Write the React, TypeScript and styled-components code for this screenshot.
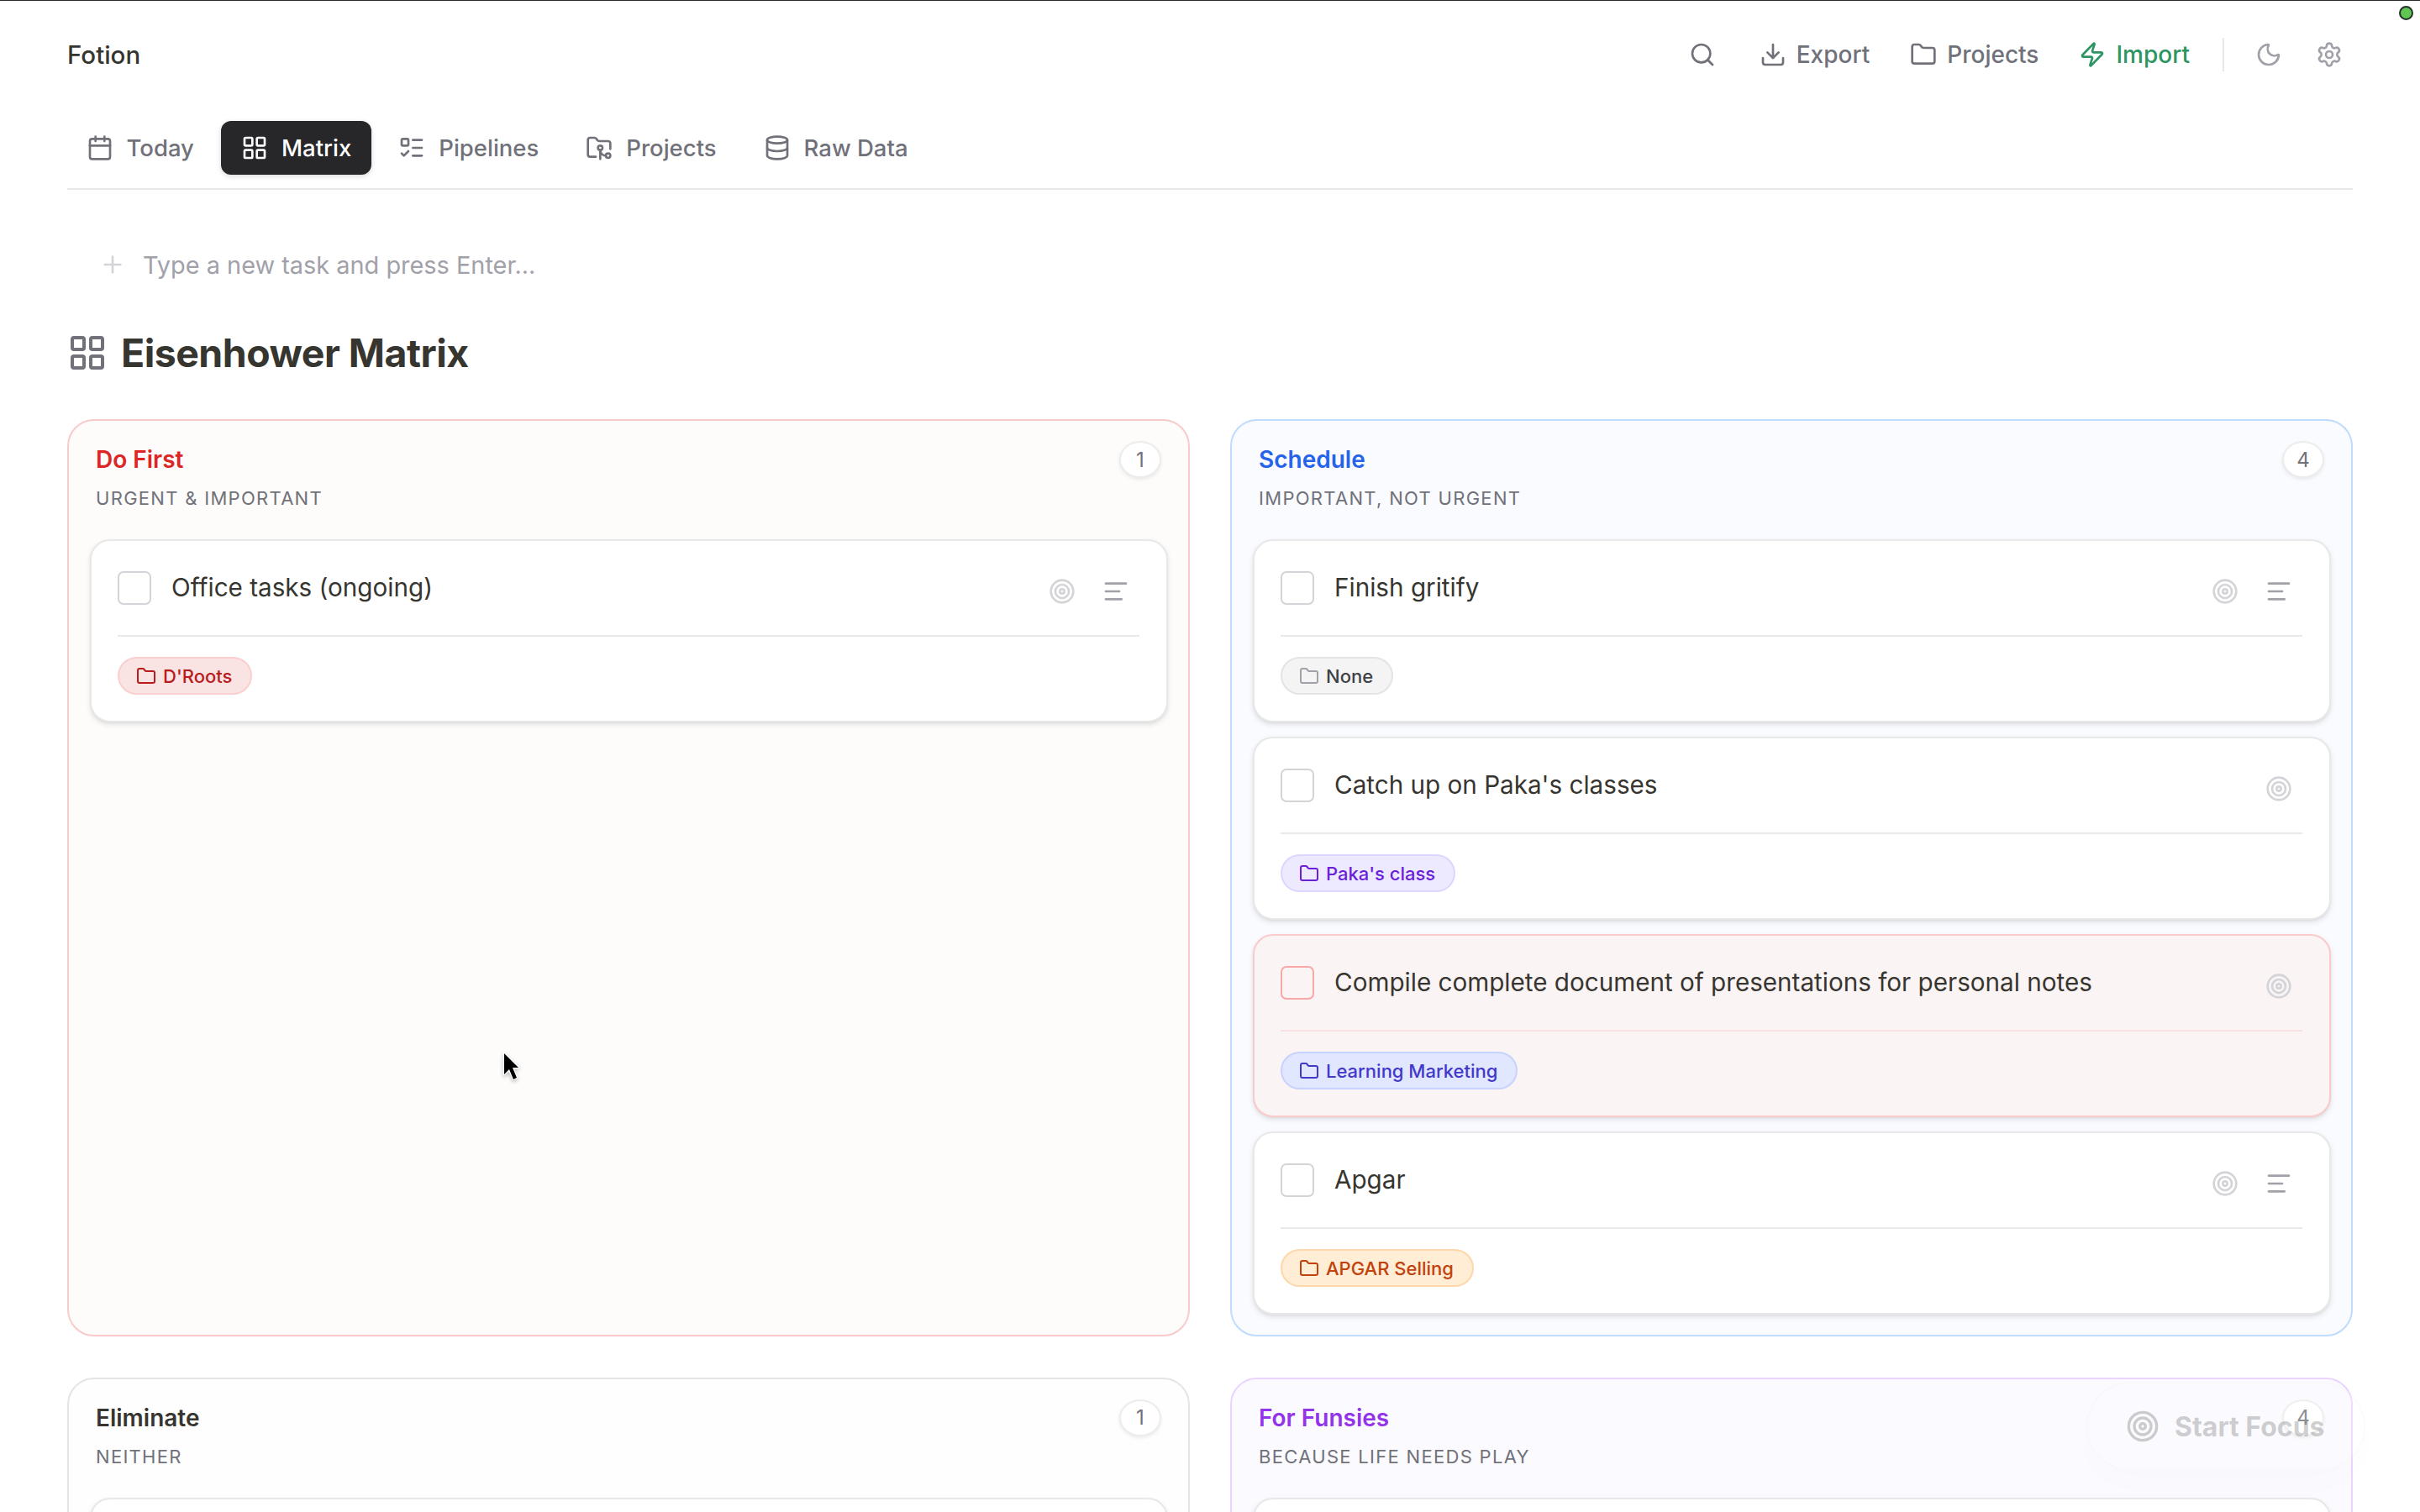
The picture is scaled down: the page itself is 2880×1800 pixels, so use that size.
import React from 'react';
import styled, { createGlobalStyle } from 'styled-components';
import {
  Calendar, LayoutGrid, ListTodo, FolderGit2, Database, Search, Download, Folder, Zap, Moon, Settings, Plus, Target,
} from 'lucide-react';

const Global = createGlobalStyle`
  html, body { margin: 0; padding: 0; background: #fff; }
  body { width: 2880px; height: 1800px; overflow: hidden; font-family: Inter, "Noto Sans", sans-serif; color: #37352f; }
  * { box-sizing: border-box; }
`;

const Page = styled.div`
  position: relative;
  width: 2880px;
  height: 1800px;
  overflow: hidden;
  border-top: 1px solid #2a2a2a;
  padding: 0 80px;
`;

const StatusDot = styled.span`
  position: absolute;
  top: 6px;
  right: 8px;
  width: 17px;
  height: 17px;
  border-radius: 50%;
  background: #5fc653;
  border: 2px solid #26332a;
`;

const TopBar = styled.header`
  display: flex;
  align-items: center;
  justify-content: space-between;
  height: 128px;
`;

const Brand = styled.div`
  font-size: 29.5px;
  font-weight: 500;
  color: #37352f;
`;

const Actions = styled.div`
  display: flex;
  align-items: center;
  margin-right: 12px;
`;

const ActionButton = styled.button<{ $tone?: string; $gap?: number }>`
  display: flex;
  align-items: center;
  gap: 12px;
  height: 56px;
  padding: 0;
  margin-left: ${(p) => p.$gap ?? 0}px;
  border: none;
  background: none;
  font: 500 28px Inter, sans-serif;
  color: ${(p) => p.$tone ?? '#71717a'};
`;

const VRule = styled.span`
  width: 2px;
  height: 40px;
  background: #e8e8e8;
  margin-left: 39px;
`;

const Tabs = styled.nav`
  display: flex;
  gap: 8px;
  height: 97px;
  padding-top: 15px;
  border-bottom: 2px solid #e8e8e8;
`;

const TabList = styled.div`
  display: flex;
  gap: 8px;
  margin-left: -1.5px;
`;

const Tab = styled.button<{ $active?: boolean }>`
  display: flex;
  align-items: center;
  gap: 16px;
  height: 64px;
  padding: 0 24px;
  border: none;
  border-radius: 12px;
  font: 500 27.5px Inter, sans-serif;
  color: ${(p) => (p.$active ? '#fff' : '#71717a')};
  background: ${(p) => (p.$active ? '#27272a' : 'transparent')};
  box-shadow: ${(p) => (p.$active ? '0 2px 6px rgba(0,0,0,.15)' : 'none')};
`;

const Composer = styled.div`
  display: flex;
  align-items: center;
  gap: 20px;
  height: 60px;
  margin-top: 59px;
  padding-left: 38px;
  font-size: 28.9px;
  color: #a1a1aa;
`;

const Heading = styled.h1`
  display: flex;
  align-items: center;
  gap: 16px;
  height: 60px;
  margin: 45px 0 49px;
  font-size: 46.4px;
  font-weight: 700;
  letter-spacing: -0.5px;
  color: #37352f;
  svg { color: #71717a; }
`;

const Matrix = styled.div`
  display: grid;
  grid-template-columns: 1fr 1fr;
  column-gap: 48px;
  row-gap: 49px;
`;

const Panel = styled.section<{ $border: string; $bg: string }>`
  border: 2px solid ${(p) => p.$border};
  background: ${(p) => p.$bg};
  border-radius: 32px;
  padding: 24px 24.5px 24px;
`;

const PanelHead = styled.div`
  display: flex;
  justify-content: space-between;
  align-items: flex-start;
  padding: 0 7.5px;
  height: 117px;
`;

const PanelTitle = styled.h2<{ $color: string }>`
  margin: 0;
  font-size: 28px;
  line-height: 44px;
  font-weight: 600;
  color: ${(p) => p.$color};
`;

const PanelSub = styled.p`
  margin: 2px 0 0;
  font-size: 22px;
  line-height: 44px;
  letter-spacing: 1.3px;
  font-weight: 400;
  color: #71717a;
  text-transform: uppercase;
`;

const Count = styled.span`
  display: flex;
  align-items: center;
  justify-content: center;
  width: 50px;
  height: 44px;
  background: #fff;
  border: 2px solid #ececec;
  border-radius: 50%;
  box-shadow: 0 2px 4px rgba(0,0,0,.08);
  font-size: 24px;
  color: #71717a;
`;

const Cards = styled.div`
  display: flex;
  flex-direction: column;
  gap: 17.5px;
`;

const Card = styled.article<{ $alert?: boolean }>`
  height: 217.5px;
  padding: 32px 31.5px 0;
  background: ${(p) => (p.$alert ? '#fbf4f4' : '#fff')};
  border: 2px solid ${(p) => (p.$alert ? '#fbcaca' : '#e8e8e8')};
  border-radius: 24px;
  box-shadow: 0 3px 6px rgba(0,0,0,.1), 0 1px 2px rgba(0,0,0,.05);
`;

const CardTop = styled.div<{ $alert?: boolean }>`
  display: flex;
  align-items: flex-start;
  height: 82px;
  border-bottom: 2px solid ${(p) => (p.$alert ? '#f9e1e1' : '#e9e9ea')};
`;

const Check = styled.span<{ $alert?: boolean }>`
  flex: none;
  width: 40px;
  height: 40px;
  margin-top: 4px;
  border: 2px solid ${(p) => (p.$alert ? '#f9a8a8' : '#d4d4d8')};
  border-radius: 7px;
`;

const TaskName = styled.div`
  flex: 1;
  margin-left: 24px;
  font-size: 29.65px;
  line-height: 47px;
  color: #37352f;
`;

const IconGroup = styled.div`
  display: flex;
  gap: 8px;
`;

const IconSlot = styled.span<{ $color: string }>`
  display: flex;
  align-items: center;
  justify-content: center;
  width: 56px;
  height: 56px;
  color: ${(p) => p.$color};
`;

const Chip = styled.span<{ $bg: string; $border: string; $fg: string; $icon: string }>`
  display: inline-flex;
  align-items: center;
  gap: 8px;
  height: 45px;
  margin-top: 24px;
  padding: 0 22px 0 20px;
  border-radius: 23px;
  border: 2px solid ${(p) => p.$border};
  background: ${(p) => p.$bg};
  color: ${(p) => p.$fg};
  font-size: 22px;
  font-weight: 500;
  svg { color: ${(p) => p.$icon}; }
`;

const FocusButton = styled.button`
  position: absolute;
  left: 2483px;
  top: 1644px;
  width: 332px;
  height: 106px;
  display: flex;
  align-items: center;
  gap: 18px;
  padding: 0 0 0 45px;
  border: 2px solid rgba(0,0,0,.015);
  border-radius: 53px;
  background: rgba(255,255,255,.2);
  box-shadow: 0 16px 40px rgba(0,0,0,.012);
  font: 700 32px Inter, sans-serif;
  color: rgba(120,120,120,.36);
`;

const Cursor = styled.svg`
  position: absolute;
  left: 595px;
  top: 1248px;
  filter: drop-shadow(0 2px 2px rgba(0,0,0,.25));
`;

function AlignLines() {
  return (
    <svg width="32" height="32" viewBox="0 0 24 24" fill="none" stroke="currentColor" strokeWidth="2" strokeLinecap="round">
      <path d="M21 5H3" />
      <path d="M15 12H3" />
      <path d="M17 19H3" />
    </svg>
  );
}

const chipTones = {
  red: { bg: '#fae3e3', border: '#fbcfcf', fg: '#b91c1c', icon: '#b91c1c' },
  gray: { bg: '#f4f4f5', border: '#e4e4e7', fg: '#3f3f46', icon: '#a1a1aa' },
  violet: { bg: '#ede9fe', border: '#ddd6fe', fg: '#6b1fd8', icon: '#6b1fd8' },
  indigo: { bg: '#e0e7ff', border: '#c7d2fe', fg: '#4338ca', icon: '#4338ca' },
  orange: { bg: '#ffedd5', border: '#fed7aa', fg: '#c2410c', icon: '#c2410c' },
};

type TaskData = { name?: string; lines?: boolean; alert?: boolean; chip?: string; tone?: keyof typeof chipTones };

function Task({ name, lines, alert, chip, tone }: TaskData) {
  const t = tone ? chipTones[tone] : null;
  return (
    <Card $alert={alert}>
      <CardTop $alert={alert}>
        <Check $alert={alert} />
        <TaskName>{name}</TaskName>
        <IconGroup>
          <IconSlot $color="#d4d4d8"><Target size={32} /></IconSlot>
          {lines && <IconSlot $color="#a1a1aa"><AlignLines /></IconSlot>}
        </IconGroup>
      </CardTop>
      {chip && t && (
        <Chip $bg={t.bg} $border={t.border} $fg={t.fg} $icon={t.icon}>
          <Folder size={24} />
          {chip}
        </Chip>
      )}
    </Card>
  );
}

type PanelData = { title: string; sub: string; count: number; color: string; border: string; bg: string; tasks: TaskData[] };

function Quadrant({ title, sub, count, color, border, bg, tasks }: PanelData) {
  return (
    <Panel $border={border} $bg={bg}>
      <PanelHead>
        <div>
          <PanelTitle $color={color}>{title}</PanelTitle>
          <PanelSub>{sub}</PanelSub>
        </div>
        <Count>{count}</Count>
      </PanelHead>
      <Cards>
        {tasks.map((t, i) => <Task key={i} {...t} />)}
      </Cards>
    </Panel>
  );
}

const panels: PanelData[] = [
  {
    title: 'Do First', sub: 'Urgent & Important', count: 1, color: '#dc2626', border: '#f9caca', bg: '#fdfcfb',
    tasks: [{ name: 'Office tasks (ongoing)', lines: true, chip: "D'Roots", tone: 'red' }],
  },
  {
    title: 'Schedule', sub: 'Important, Not Urgent', count: 4, color: '#2563eb', border: '#bfdbfe', bg: '#f9fbff',
    tasks: [
      { name: 'Finish gritify', lines: true, chip: 'None', tone: 'gray' },
      { name: "Catch up on Paka's classes", chip: "Paka's class", tone: 'violet' },
      { name: 'Compile complete document of presentations for personal notes', alert: true, chip: 'Learning Marketing', tone: 'indigo' },
      { name: 'Apgar', lines: true, chip: 'APGAR Selling', tone: 'orange' },
    ],
  },
  {
    title: 'Eliminate', sub: 'Neither', count: 1, color: '#37352f', border: '#e5e5e5', bg: '#fefefe',
    tasks: [{ lines: true }],
  },
  {
    title: 'For Funsies', sub: 'Because life needs play', count: 4, color: '#9333ea', border: '#e9d5ff', bg: '#fbfbff',
    tasks: [{ lines: true }],
  },
];

export default function App() {
  return (
    <Page>
      <Global />
      <StatusDot />
      <TopBar>
        <Brand>Fotion</Brand>
        <Actions>
          <ActionButton aria-label="Search"><Search size={32} /></ActionButton>
          <ActionButton $gap={52}><Download size={32} />Export</ActionButton>
          <ActionButton $gap={48}><Folder size={32} />Projects</ActionButton>
          <ActionButton $gap={48} $tone="#2d9562"><Zap size={32} />Import</ActionButton>
          <VRule />
          <ActionButton $gap={37} $tone="#a1a1aa" aria-label="Theme"><Moon size={32} /></ActionButton>
          <ActionButton $gap={40} $tone="#a1a1aa" aria-label="Settings"><Settings size={32} /></ActionButton>
        </Actions>
      </TopBar>
      <Tabs>
        <TabList>
          <Tab><Calendar size={32} />Today</Tab>
          <Tab $active><LayoutGrid size={32} />Matrix</Tab>
          <Tab><ListTodo size={32} />Pipelines</Tab>
          <Tab><FolderGit2 size={32} />Projects</Tab>
          <Tab><Database size={32} />Raw Data</Tab>
        </TabList>
      </Tabs>
      <Composer><Plus size={32} color="#d4d4d8" />Type a new task and press Enter...</Composer>
      <Heading><LayoutGrid size={48} />Eisenhower Matrix</Heading>
      <Matrix>
        {panels.map((p) => <Quadrant key={p.title} {...p} />)}
      </Matrix>
      <FocusButton><Target size={40} />Start Focus</FocusButton>
      <Cursor width="28" height="42" viewBox="0 0 28 42">
        <path d="M5 5 L5 30 L11 24 L16 36 L20 34 L15 22 L22 22 Z" fill="#000" stroke="#fff" strokeWidth="2.5" strokeLinejoin="round" paintOrder="stroke" />
      </Cursor>
    </Page>
  );
}
